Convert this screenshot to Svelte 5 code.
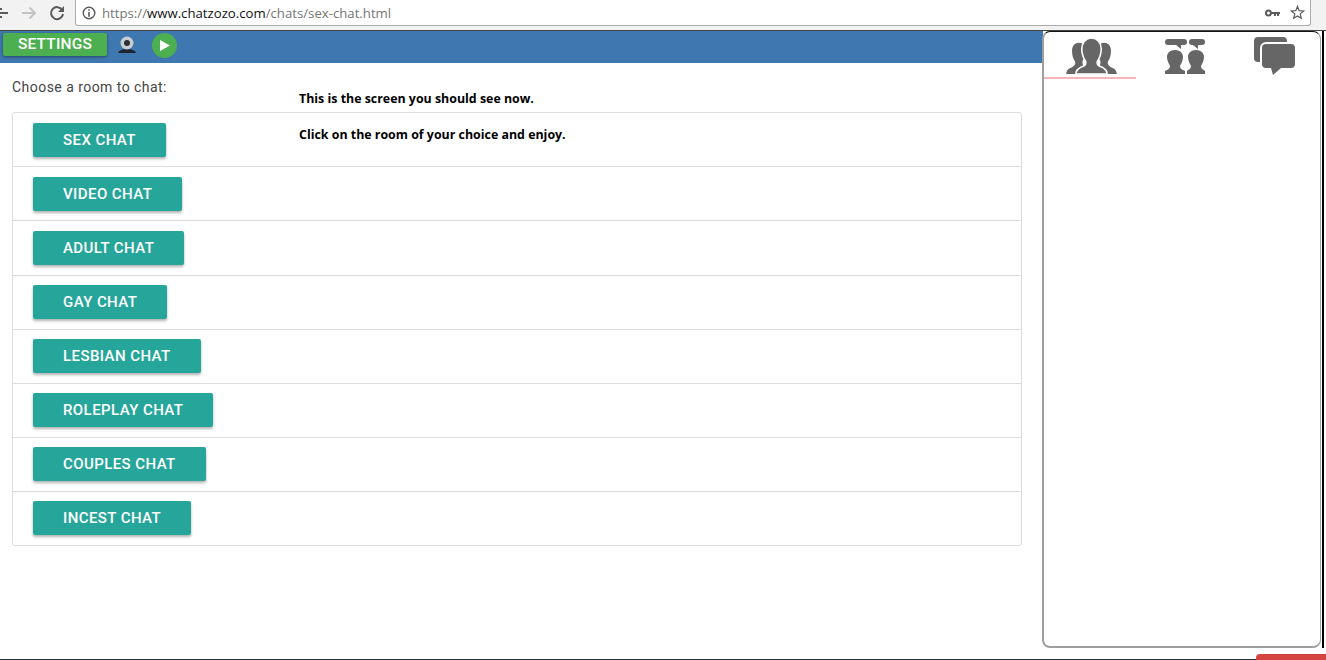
<script>
  const rooms = [
    "SEX CHAT",
    "VIDEO CHAT",
    "ADULT CHAT",
    "GAY CHAT",
    "LESBIAN CHAT",
    "ROLEPLAY CHAT",
    "COUPLES CHAT",
    "INCEST CHAT"
  ];
</script>

<div class="shot">
  <header class="browser">
    <div class="nav">
      <svg width="8" height="14" viewBox="0 0 8 14"><path d="M0 6h8v2H0zM0 2h2v2H0zM0 10h2v2H0z" fill="#5a5a5a" /></svg>
      <svg width="16" height="14" viewBox="0 0 16 14"><path d="M1 7h13M8.500 1.500 14 7l-5.500 5.500" fill="none" stroke="#c4c4c4" stroke-width="2" /></svg>
      <svg width="16" height="16" viewBox="0 0 16 16"><path d="M13.200 5A6 6 0 1 0 14 9" fill="none" stroke="#5a5a5a" stroke-width="2" /><path d="M15 1v6H9z" fill="#5a5a5a" /></svg>
    </div>
    <div class="address">
      <svg width="14" height="14" viewBox="0 0 14 14"><circle cx="7" cy="7" r="5.800" fill="none" stroke="#5a5a5a" stroke-width="1.400" /><path d="M6.200 3.200h1.600v1.600H6.200zM6.200 6h1.600v4.800H6.200z" fill="#5a5a5a" /></svg>
      <span class="url"><span class="dim">https://</span>www.chatzozo.com<span class="dim">/chats/sex-chat.html</span></span>
      <span class="tools">
        <svg width="15" height="8" viewBox="0 0 15 8"><circle cx="3.500" cy="4" r="2.500" fill="none" stroke="#5a5a5a" stroke-width="2" /><path d="M6 3h9v2h-1v2h-2V5h-1v2H9V5H6z" fill="#5a5a5a" /></svg>
        <svg width="15" height="15" viewBox="0 0 15 15"><path d="M7.500 1.500 9.200 5.700l4.500.3-3.500 2.900 1.100 4.400-3.800-2.400-3.800 2.400 1.100-4.400L1.300 6l4.500-.3z" fill="none" stroke="#5a5a5a" stroke-width="1.200" /></svg>
      </span>
    </div>
  </header>

  <div class="page">
    <main class="main">
      <div class="topbar">
        <button class="settings">SETTINGS</button>
        <svg class="cam" width="20" height="17" viewBox="0 0 20 17">
          <path d="M1 17c1-3 5-4 9-4s8 1 9 4z" fill="#1d2630" />
          <circle cx="10" cy="7" r="6.500" fill="#c9ccd0" />
          <circle cx="10" cy="7" r="3" fill="#2a2f36" />
        </svg>
        <span class="play">
          <svg width="10" height="11" viewBox="0 0 10 11"><path d="M0 0l10 5.500L0 11z" fill="#fff" /></svg>
        </span>
      </div>

      <div class="content">
        <p class="choose">Choose a room to chat:</p>
        <ul class="rooms">
          {#each rooms as room}
            <li><button class="room">{room}</button></li>
          {/each}
        </ul>
        <div class="note">
          <p>This is the screen you should see now.</p>
          <p>Click on the room of your choice and enjoy.</p>
        </div>
      </div>
    </main>

    <aside class="panel">
      <nav class="tabs">
        <div class="tab active">
          <svg width="51" height="36" viewBox="0 0 52 37">
            <g fill="#666">
              <path d="M13 5c4 0 7 3 7 8 0 4-1 7-3 10-1 3 1 4 0 6l-5 8H0c0-4 3-6 6-7 3-2 4-3 3-6-2-3-3-6-3-11 0-5 3-8 7-8z" />
              <path d="M39 5c-4 0-7 3-7 8 0 4 1 7 3 10 1 3-1 4 0 6l5 8h12c0-4-3-6-6-7-3-2-4-3-3-6 2-3 3-6 3-11 0-5-3-8-7-8z" />
              <path d="M26 0c6 0 10 5 10 11 0 6-2 10-4 13-1 4 2 5 5 6 3 2 5 3 5 7H10c0-4 2-5 5-7 3-1 6-2 5-6-2-3-4-7-4-13 0-6 4-11 10-11z" stroke="#fff" stroke-width="1.600" />
            </g>
          </svg>
        </div>
        <div class="tab talk">
          <svg width="40" height="36" viewBox="0 0 40 36">
            <g fill="#666">
              <rect x="0" y="1" width="22" height="6" rx="3" />
              <path d="M11 7h5v4z" />
              <rect x="24" y="1" width="16" height="6" rx="3" />
              <path d="M28 7h5v4z" />
              <path d="M10 12c5 0 8 3 8 7 0 4-2 7-3 9 0 3 3 4 5 5v3H0v-3c2-1 5-2 5-5-1-2-3-5-3-9 0-4 3-7 8-7z" />
              <path d="M31 12c5 0 8 3 8 7 0 4-2 7-3 9 0 3 3 4 4 5v3H22v-3c1-1 4-2 4-5-1-2-3-5-3-9 0-4 3-7 8-7z" />
            </g>
          </svg>
        </div>
        <div class="tab chats">
          <svg width="41" height="38" viewBox="0 0 41 38">
            <path d="M4 0h25a4 4 0 0 1 4 4v1H12a6 6 0 0 0-6 6v14H4a4 4 0 0 1-4-4V4a4 4 0 0 1 4-4z" fill="#666" />
            <path d="M12 7h25a4 4 0 0 1 4 4v16a4 4 0 0 1-4 4h-10l-8 7-2-7h-5a4 4 0 0 1-4-4V11a4 4 0 0 1 4-4z" fill="#666" />
          </svg>
        </div>
      </nav>
    </aside>
    <div class="edge"></div>
  </div>

  <footer class="bottom">
    <span class="redtab"></span>
  </footer>
</div>

<style>
  :global(body) {
    margin: 0;
    background: #fff;
    overflow: hidden;
  }

  .shot {
    width: 1326px;
    height: 660px;
    display: flex;
    flex-direction: column;
    font-family: Roboto, "Liberation Sans", sans-serif;
    position: relative;
    overflow: hidden;
  }

  .browser {
    height: 31px;
    flex: none;
    box-sizing: border-box;
    background: #f2f2f2;
    border-bottom: 1px solid #444;
    display: flex;
    align-items: flex-start;
    padding-right: 15px;
  }

  .nav {
    width: 75px;
    flex: none;
    height: 25px;
    display: flex;
    align-items: center;
    gap: 12.5px;
    padding-top: 1px;
    box-sizing: border-box;
  }

  .address {
    flex: 1;
    height: 26px;
    box-sizing: border-box;
    background: #fff;
    border: 1px solid #ababab;
    border-top: none;
    border-radius: 0 0 3px 3px;
    display: flex;
    align-items: center;
    padding: 0 5px 0 6px;
    gap: 6px;
    font-family: "Open Sans", sans-serif;
    font-size: 13.2px;
    color: #111;
  }

  .dim {
    color: #757575;
  }

  .tools {
    margin-left: auto;
    display: flex;
    align-items: center;
    gap: 10px;
  }

  .page {
    flex: 1;
    min-height: 0;
    display: flex;
    align-items: stretch;
    box-sizing: border-box;
    padding: 0 2px 11px 0;
  }

  .main {
    width: 1043px;
    flex: none;
    display: flex;
    flex-direction: column;
  }

  .topbar {
    height: 32px;
    flex: none;
    background: #3f77b0;
    display: flex;
    align-items: flex-start;
    padding: 2px 0 0 3px;
    box-sizing: border-box;
  }

  .settings {
    width: 104px;
    height: 23px;
    padding: 0 0 2px;
    border: none;
    border-radius: 2px;
    background: #4caf50;
    color: #fff;
    font: 500 15.5px Roboto, sans-serif;
    letter-spacing: 0.2px;
    box-shadow: 0 1px 3px rgba(0, 0, 0, 0.4);
  }

  .cam {
    margin: 3px 0 0 10px;
  }

  .play {
    width: 25px;
    height: 25px;
    margin: 0 0 0 15px;
    border-radius: 50%;
    background: #4caf50;
    display: flex;
    align-items: center;
    justify-content: center;
  }

  .content {
    flex: 1;
    position: relative;
    padding: 0 21px 0 12px;
  }

  .choose {
    margin: 0;
    padding-top: 16px;
    height: 49px;
    box-sizing: border-box;
    font-size: 14px;
    line-height: 17px;
    letter-spacing: 0.46px;
    color: #444;
  }

  .rooms {
    list-style: none;
    margin: 0;
    padding: 0;
    border: 1px solid #ddd;
    border-radius: 3px;
  }

  .rooms li {
    height: 54px;
    box-sizing: border-box;
    padding: 10px 20px 0;
    border-bottom: 1px solid #ddd;
  }

  .rooms li:nth-child(3) {
    height: 55px;
  }

  .rooms li:nth-child(n + 4) {
    padding-top: 9px;
  }

  .rooms li:last-child {
    border-bottom: none;
    height: 53px;
  }

  .room {
    height: 34px;
    padding: 0 30px;
    border: none;
    border-radius: 2px;
    background: #26a69a;
    color: #fff;
    font: 500 15px Roboto, sans-serif;
    letter-spacing: 0.42px;
    box-shadow: 0 2px 3px rgba(0, 0, 0, 0.3);
  }

  .note {
    position: absolute;
    left: 299px;
    top: 27px;
    font-family: "Open Sans", sans-serif;
    font-size: 12.4px;
    font-weight: 700;
    color: #000;
  }

  .note p {
    margin: 0 0 18px;
    line-height: 18px;
  }

  .panel {
    width: 279px;
    flex: none;
    margin: 0 1px 0 -1px;
    box-sizing: border-box;
    background: #fff;
    border: 2px solid #9e9e9e;
    border-top: 1px solid #111;
    border-right-width: 1px;
    border-radius: 8px;
  }

  .tabs {
    display: flex;
    height: 47px;
  }

  .tab {
    flex: 1;
    display: flex;
    justify-content: center;
    align-items: flex-start;
    padding-top: 6px;
    box-sizing: border-box;
  }

  .tab svg {
    margin-left: 3px;
  }

  .tab.active {
    border-bottom: 2px solid #f7b5b8;
  }

  .tab.talk svg {
    margin-left: 5px;
  }

  .tab.chats {
    padding-top: 5px;
  }

  .tab.chats svg {
    margin-left: 1px;
  }

  .edge {
    width: 2px;
    flex: none;
    background: #000;
  }

  .bottom {
    height: 1px;
    flex: none;
    background: #2c3542;
    position: relative;
  }

  .redtab {
    position: absolute;
    right: 0;
    bottom: 0;
    width: 70px;
    height: 6px;
    background: #d44440;
    border-radius: 4px 0 0 0;
  }
</style>
